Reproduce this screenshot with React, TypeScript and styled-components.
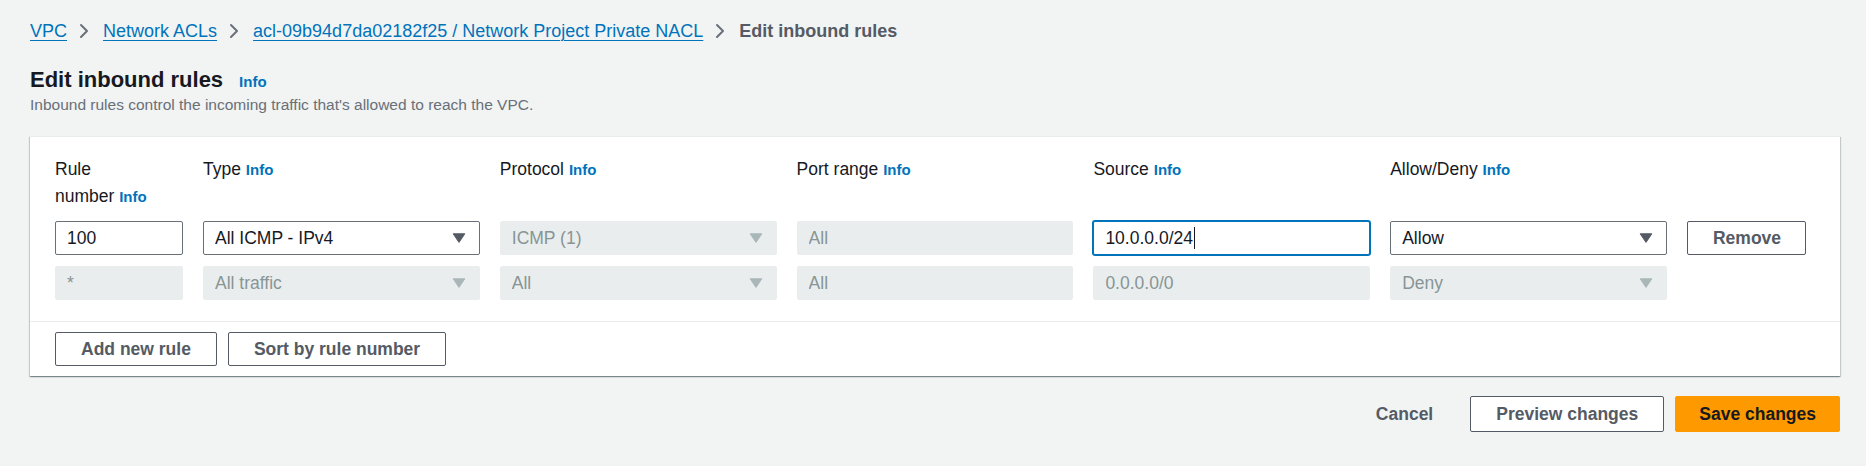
import React from "react";
import styled, { createGlobalStyle } from "styled-components";

const GlobalStyle = createGlobalStyle`
  html, body { margin: 0; padding: 0; background: #f2f3f3; }
  body {
    font-family: "Liberation Sans", Arial, sans-serif;
    color: #16191f;
    -webkit-font-smoothing: antialiased;
  }
  * { box-sizing: border-box; }
`;

const Page = styled.div`
  padding: 19px 26px 0 30px;
`;

const Breadcrumbs = styled.nav`
  display: flex;
  align-items: center;
  height: 24px;
  font-size: 18px;
  line-height: 24px;
`;

const Crumb = styled.a`
  color: #0073bb;
  text-decoration: underline;
  text-underline-offset: 3px;
  text-decoration-thickness: 1px;
  cursor: pointer;
`;

const CurrentCrumb = styled.span`
  color: #545b64;
  font-weight: bold;
`;

const SeparatorIcon = styled.svg`
  width: 10px;
  height: 16px;
  margin: 0 14px 0 12px;
  flex: none;
`;

const Chevron = () => (
  <SeparatorIcon viewBox="0 0 10 16" aria-hidden="true">
    <polyline points="2,2 8,8 2,14" fill="none" stroke="#687078" strokeWidth="2" strokeLinecap="round" strokeLinejoin="round" />
  </SeparatorIcon>
);

const HeaderBlock = styled.header`
  margin-top: 23px;
`;

const TitleRow = styled.div`
  display: flex;
  align-items: baseline;
  gap: 16px;
`;

const Title = styled.h1`
  margin: 0;
  font-size: 22px;
  line-height: 28px;
  font-weight: bold;
  color: #16191f;
`;

const InfoLink = styled.a`
  color: #0073bb;
  font-weight: bold;
  font-size: 15px;
  cursor: pointer;
`;

const Description = styled.p`
  margin: 0;
  font-size: 15.5px;
  line-height: 22px;
  color: #687078;
`;

const Card = styled.section`
  margin-top: 20px;
  background: #ffffff;
  border-top: 1px solid #eaeded;
  box-shadow: 0 1px 1px 0 rgba(0, 28, 36, 0.3), 1px 1px 1px 0 rgba(0, 28, 36, 0.15),
    -1px 1px 1px 0 rgba(0, 28, 36, 0.15);
`;

const RulesGrid = styled.div`
  display: grid;
  grid-template-columns: 128px repeat(5, minmax(0, 1fr)) 119px;
  column-gap: 20px;
  row-gap: 11px;
  padding: 19px 34px 21px 25px;
`;

const ColumnLabel = styled.div`
  font-size: 17.5px;
  line-height: 27px;
  color: #16191f;
`;

const NoWrap = styled.span`
  white-space: nowrap;
`;

type FieldState = "normal" | "disabled" | "focused";

const Field = styled.div<{ $state: FieldState }>`
  height: 34px;
  display: flex;
  align-items: center;
  padding: 0 13px 0 11px;
  border-radius: 2px;
  font-size: 17.5px;
  white-space: nowrap;
  overflow: hidden;
  border: 1px solid
    ${(p) => (p.$state === "disabled" ? "#eaeded" : p.$state === "focused" ? "#0073bb" : "#687078")};
  background: ${(p) => (p.$state === "disabled" ? "#eaeded" : "#ffffff")};
  color: ${(p) => (p.$state === "disabled" ? "#879596" : "#16191f")};
  box-shadow: ${(p) => (p.$state === "focused" ? "0 0 0 1px #0073bb" : "none")};
`;

const FieldText = styled.span`
  flex: 1;
  overflow: hidden;
`;

const Caret = styled.span`
  display: inline-block;
  width: 1px;
  height: 22px;
  background: #16191f;
  vertical-align: -5px;
  margin-left: 1px;
`;

const ArrowIcon = styled.svg`
  width: 14px;
  height: 10px;
  flex: none;
`;

const Arrow = ({ disabled }: { disabled?: boolean }) => (
  <ArrowIcon viewBox="0 0 14 10" aria-hidden="true">
    <path
      d="M1.2 0.8 H12.8 L7 9.4 Z"
      fill={disabled ? "#aab7b8" : "#545b64"}
      stroke={disabled ? "#aab7b8" : "#545b64"}
      strokeWidth="1"
      strokeLinejoin="round"
    />
  </ArrowIcon>
);

type BtnVariant = "normal" | "primary" | "link";

const Button = styled.button<{ $variant?: BtnVariant; $tall?: boolean }>`
  height: ${(p) => (p.$tall ? "36px" : "34px")};
  padding: 0 ${(p) => (p.$variant === "primary" ? "23px" : "25px")};
  border-radius: 2px;
  font-family: "Liberation Sans", Arial, sans-serif;
  font-weight: bold;
  font-size: 17.5px;
  cursor: pointer;
  white-space: nowrap;
  border: 1px solid
    ${(p) => (p.$variant === "primary" ? "#ff9900" : p.$variant === "link" ? "transparent" : "#545b64")};
  background: ${(p) => (p.$variant === "primary" ? "#ff9900" : p.$variant === "link" ? "transparent" : "#ffffff")};
  color: ${(p) => (p.$variant === "primary" ? "#16191f" : "#545b64")};
`;

const RowButton = styled(Button)`
  align-self: center;
`;

const CardFooter = styled.div`
  display: flex;
  gap: 11px;
  padding: 10px 25px;
  border-top: 1px solid #eaeded;
`;

const Actions = styled.div`
  display: flex;
  justify-content: flex-end;
  align-items: center;
  gap: 11px;
  margin-top: 20px;
`;

const Label = ({ children }: { children: React.ReactNode }) => (
  <ColumnLabel>
    {children} <InfoLink>Info</InfoLink>
  </ColumnLabel>
);

const Input = ({ value, state = "normal", caret }: { value: string; state?: FieldState; caret?: boolean }) => (
  <Field $state={state}>
    <FieldText>
      {value}
      {caret && <Caret />}
    </FieldText>
  </Field>
);

const Select = ({ value, disabled }: { value: string; disabled?: boolean }) => (
  <Field $state={disabled ? "disabled" : "normal"}>
    <FieldText>{value}</FieldText>
    <Arrow disabled={disabled} />
  </Field>
);

export default function App() {
  return (
    <>
      <GlobalStyle />
      <Page>
        <Breadcrumbs>
          <Crumb>VPC</Crumb>
          <Chevron />
          <Crumb>Network ACLs</Crumb>
          <Chevron />
          <Crumb>acl-09b94d7da02182f25 / Network Project Private NACL</Crumb>
          <Chevron />
          <CurrentCrumb>Edit inbound rules</CurrentCrumb>
        </Breadcrumbs>

        <HeaderBlock>
          <TitleRow>
            <Title>Edit inbound rules</Title>
            <InfoLink>Info</InfoLink>
          </TitleRow>
          <Description>Inbound rules control the incoming traffic that's allowed to reach the VPC.</Description>
        </HeaderBlock>

        <Card>
          <RulesGrid>
            <ColumnLabel>
              Rule
              <br />
              <NoWrap>
                number <InfoLink>Info</InfoLink>
              </NoWrap>
            </ColumnLabel>
            <Label>Type</Label>
            <Label>Protocol</Label>
            <Label>Port range</Label>
            <Label>Source</Label>
            <Label>Allow/Deny</Label>
            <div />

            <Input value="100" />
            <Select value="All ICMP - IPv4" />
            <Select value="ICMP (1)" disabled />
            <Input value="All" state="disabled" />
            <Input value="10.0.0.0/24" state="focused" caret />
            <Select value="Allow" />
            <RowButton>Remove</RowButton>

            <Input value="*" state="disabled" />
            <Select value="All traffic" disabled />
            <Select value="All" disabled />
            <Input value="All" state="disabled" />
            <Input value="0.0.0.0/0" state="disabled" />
            <Select value="Deny" disabled />
            <div />
          </RulesGrid>
          <CardFooter>
            <Button>Add new rule</Button>
            <Button>Sort by rule number</Button>
          </CardFooter>
        </Card>

        <Actions>
          <Button $variant="link" $tall>
            Cancel
          </Button>
          <Button $tall>Preview changes</Button>
          <Button $variant="primary" $tall>
            Save changes
          </Button>
        </Actions>
      </Page>
    </>
  );
}
